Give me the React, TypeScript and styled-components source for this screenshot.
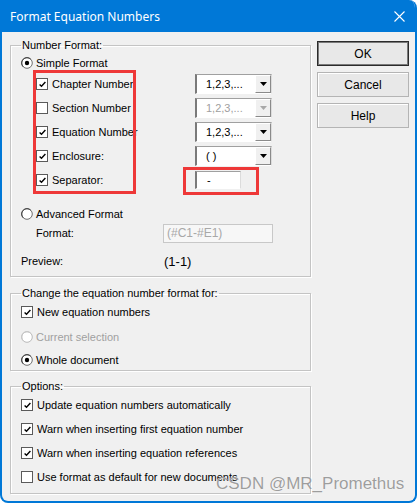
import React from "react";
import styled, { createGlobalStyle } from "styled-components";

const GlobalStyle = createGlobalStyle`
  html, body {
    margin: 0;
    padding: 0;
    background: #ffffff;
  }
  body {
    font-family: "Liberation Sans", Arial, sans-serif;
    font-size: 11px;
    color: #000;
  }
  * {
    box-sizing: border-box;
  }
`;

const CheckIcon = () => (
  <svg width="9" height="9" viewBox="0 0 9 9">
    <path d="M1.6 4.4 L3.5 6.3 L7.4 2" fill="none" stroke="#000" strokeWidth="1.4" />
  </svg>
);

const Checkbox: React.FC<{ checked?: boolean }> = ({ checked }) => (
  <Box>{checked && <CheckIcon />}</Box>
);

const Radio: React.FC<{ selected?: boolean; disabled?: boolean }> = ({ selected, disabled }) => (
  <RadioSvg width="12" height="12" viewBox="0 0 12 12">
    <circle cx="6" cy="6" r="5.3" fill="#fff" stroke={disabled ? "#b8b8b8" : "#6e6e6e"} strokeWidth="1" />
    <path d="M2.2 9.8 A5.3 5.3 0 0 1 9.8 2.2" fill="none" stroke={disabled ? "#c8c8c8" : "#404040"} strokeWidth="1" />
    {selected && <circle cx="6" cy="6" r="2.2" fill="#000" />}
  </RadioSvg>
);

const Dropdown: React.FC<{ value: string; disabled?: boolean }> = ({ value, disabled }) => (
  <Select>
    <SelectText $disabled={disabled}>{value}</SelectText>
    <ArrowButton>
      <svg width="7" height="4" viewBox="0 0 7 4">
        <path d="M0 0 H7 L3.5 4 Z" fill={disabled ? "#a8a8a8" : "#000"} />
      </svg>
    </ArrowButton>
  </Select>
);

const numberRows = [
  { label: "Chapter Number:", checked: true, value: "1,2,3,...", disabled: false },
  { label: "Section Number", checked: false, value: "1,2,3,...", disabled: true },
  { label: "Equation Number", checked: true, value: "1,2,3,...", disabled: false },
  { label: "Enclosure:", checked: true, value: "( )", disabled: false },
];

const options = [
  { label: "Update equation numbers automatically", checked: true },
  { label: "Warn when inserting first equation number", checked: true },
  { label: "Warn when inserting equation references", checked: true },
  { label: "Use format as default for new documents", checked: false },
];

const App: React.FC = () => {
  return (
    <>
      <GlobalStyle />
      <Window>
        <TitleBar>
          <Title>Format Equation Numbers</Title>
          <svg width="11" height="11" viewBox="0 0 11 11">
            <path d="M0.5 0.5 L10.5 10.5 M10.5 0.5 L0.5 10.5" stroke="#fff" strokeWidth="1.1" />
          </svg>
        </TitleBar>
        <Body>
          <LeftColumn>
            <Group>
              <Legend>Number Format:</Legend>
              <Row $h={18}>
                <Radio selected />
                <Label>Simple Format</Label>
              </Row>
              {numberRows.map((r) => (
                <Row key={r.label} $h={24} $indent={15}>
                  <Checkbox checked={r.checked} />
                  <Label $width={143}>{r.label}</Label>
                  <Dropdown value={r.value} disabled={r.disabled} />
                </Row>
              ))}
              <Row $h={24} $indent={15}>
                <Checkbox checked />
                <Label $width={143}>Separator:</Label>
                <TextBox>-</TextBox>
              </Row>
              <Row $h={18} $mt={13}>
                <Radio />
                <Label>Advanced Format</Label>
              </Row>
              <Row $h={20} $indent={15}>
                <Label $width={127}>Format:</Label>
                <FormatBox>(#C1-#E1)</FormatBox>
              </Row>
              <Row $h={20} $mt={8}>
                <Label $width={143}>Preview:</Label>
                <PreviewValue>(1-1)</PreviewValue>
              </Row>
            </Group>

            <Group $mt={10} $pt={3} $pb={1}>
              <Legend>Change the equation number format for:</Legend>
              <Row $h={20}>
                <Checkbox checked />
                <Label>New equation numbers</Label>
              </Row>
              <Row $h={20} $mt={5}>
                <Radio disabled />
                <Label $disabled>Current selection</Label>
              </Row>
              <Row $h={18} $mt={4}>
                <Radio selected />
                <Label>Whole document</Label>
              </Row>
            </Group>

            <Group $mt={9} $pt={1} $pb={4}>
              <Legend>Options:</Legend>
              {options.map((o) => (
                <Row key={o.label} $h={24}>
                  <Checkbox checked={o.checked} />
                  <Label>{o.label}</Label>
                </Row>
              ))}
            </Group>
          </LeftColumn>

          <ButtonColumn>
            <DialogButton $default>OK</DialogButton>
            <DialogButton>Cancel</DialogButton>
            <DialogButton>Help</DialogButton>
          </ButtonColumn>
        </Body>

        <Highlight style={{ left: 31, top: 70, width: 103, height: 124 }} />
        <Highlight style={{ left: 181, top: 167, width: 76, height: 28 }} />
        <Watermark>CSDN @MR_Promethus</Watermark>
      </Window>
    </>
  );
};

const Window = styled.div`
  position: relative;
  width: 417px;
  height: 503px;
  background: #f0f0f0;
  border: 2px solid #0078d7;
  border-top: none;
  border-radius: 0 8px 8px 8px;
  overflow: hidden;
  display: flex;
  flex-direction: column;
`;

const TitleBar = styled.div`
  height: 32px;
  flex-shrink: 0;
  margin: 0 -2px;
  padding: 0 12px 0 10px;
  background: #0078d7;
  display: flex;
  align-items: center;
  justify-content: space-between;
`;

const Title = styled.span`
  font-family: "Noto Sans", "Open Sans", sans-serif;
  font-size: 12px;
  color: #ffffff;
`;

const Body = styled.div`
  display: flex;
  gap: 6px;
  padding: 7px 0 0 8px;
`;

const LeftColumn = styled.div`
  width: 301px;
  display: flex;
  flex-direction: column;
`;

const Group = styled.fieldset<{ $mt?: number; $pt?: number; $pb?: number }>`
  margin: ${(p) => p.$mt ?? 0}px 0 0 0;
  padding: ${(p) => p.$pt ?? 3}px 0 ${(p) => p.$pb ?? 5}px 10px;
  min-width: 0;
  border: 1px solid #c4c4c4;
  box-shadow: inset 1px 1px 0 #ffffff, 1px 1px 0 #ffffff;
`;

const Legend = styled.legend`
  padding: 0 1px;
  line-height: 12px;
  font-size: 11px;
`;

const Row = styled.div<{ $h: number; $indent?: number; $mt?: number }>`
  display: flex;
  align-items: center;
  height: ${(p) => p.$h}px;
  margin-top: ${(p) => p.$mt ?? 0}px;
  padding-left: ${(p) => p.$indent ?? 0}px;
`;

const Box = styled.span`
  width: 12px;
  height: 12px;
  flex-shrink: 0;
  margin-right: 4px;
  background: #ffffff;
  border: 1px solid #5a5a5a;
  display: flex;
  align-items: center;
  justify-content: center;
`;

const RadioSvg = styled.svg`
  flex-shrink: 0;
  margin-right: 3px;
`;

const Label = styled.span<{ $width?: number; $disabled?: boolean }>`
  width: ${(p) => (p.$width ? `${p.$width}px` : "auto")};
  flex-shrink: 0;
  white-space: nowrap;
  color: ${(p) => (p.$disabled ? "#a0a0a0" : "#000")};
`;

const Select = styled.div`
  width: 77px;
  height: 20px;
  display: flex;
  background: #ffffff;
  border-top: 1px solid #a0a0a0;
  border-left: 2px solid #7a7a7a;
  border-right: 1px solid #dcdcdc;
  border-bottom: 1px solid #ffffff;
`;

const SelectText = styled.span<{ $disabled?: boolean }>`
  flex: 1;
  padding-left: 9px;
  line-height: 18px;
  color: ${(p) => (p.$disabled ? "#a0a0a0" : "#000")};
`;

const ArrowButton = styled.span`
  width: 16px;
  background: #f0f0f0;
  border-top: 1px solid #ffffff;
  border-left: 1px solid #ffffff;
  border-right: 1px solid #8a8a8a;
  border-bottom: 1px solid #8a8a8a;
  display: flex;
  align-items: center;
  justify-content: center;
`;

const TextBox = styled.span`
  width: 46px;
  height: 18px;
  padding-left: 10px;
  line-height: 16px;
  background: #ffffff;
  border-top: 1px solid #a0a0a0;
  border-left: 2px solid #7a7a7a;
  border-right: 1px solid #dcdcdc;
  border-bottom: 1px solid #ffffff;
`;

const FormatBox = styled.span`
  width: 110px;
  height: 19px;
  padding-left: 3px;
  line-height: 17px;
  font-size: 12px;
  color: #a8a8a8;
  background: #f7f7f7;
  border: 1px solid #c8c8c8;
`;

const PreviewValue = styled.span`
  font-size: 13px;
`;

const ButtonColumn = styled.div`
  display: flex;
  flex-direction: column;
  gap: 6px;
  padding-top: 2px;
`;

const DialogButton = styled.button<{ $default?: boolean }>`
  width: 92px;
  height: 25px;
  padding: 0;
  font-family: "Liberation Sans", Arial, sans-serif;
  font-size: 12px;
  color: #000;
  background: #e8e8e8;
  border: 1px solid ${(p) => (p.$default ? "#2b2b2b" : "#b4b4b4")};
  box-shadow: ${(p) => (p.$default ? "inset 0 0 0 1px #7a7a7a" : "inset 1px 1px 0 #ffffff")};
`;

const Highlight = styled.div`
  position: absolute;
  border: 3px solid #ee3838;
  pointer-events: none;
`;

const Watermark = styled.div`
  position: absolute;
  left: 214px;
  top: 474px;
  font-family: "Liberation Sans", Arial, sans-serif;
  font-size: 17px;
  color: rgba(140, 140, 140, 0.85);
  text-shadow: 0 0 1px #ffffff;
  white-space: nowrap;
`;

export default App;
